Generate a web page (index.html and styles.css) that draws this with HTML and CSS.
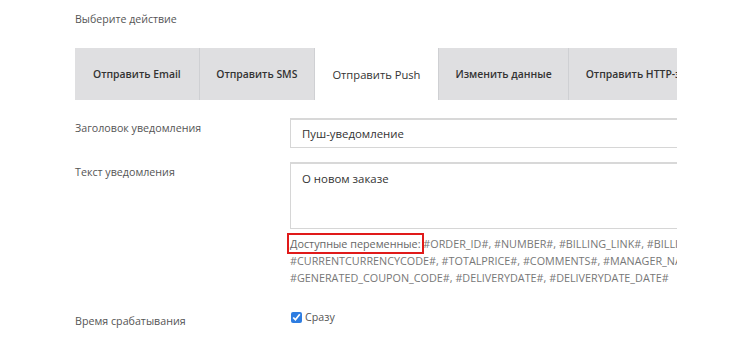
FILE: index.html
```html
<!DOCTYPE html>
<html lang="ru">
<head>
    <meta charset="UTF-8">
    <title>Действие</title>
    <link rel="stylesheet" href="styles.css">
</head>
<body>
    <div class="page">
        <div class="form">
            <div class="section-title">Выберите действие</div>

            <div class="tabs">
                <div class="tab">Отправить Email</div>
                <div class="tab">Отправить SMS</div>
                <div class="tab active">Отправить Push</div>
                <div class="tab">Изменить данные</div>
                <div class="tab">Отправить HTTP-запрос</div>
            </div>

            <div class="row">
                <label class="label" for="title">Заголовок уведомления</label>
                <div class="field">
                    <input class="input" type="text" id="title" value="Пуш-уведомление">
                </div>
            </div>

            <div class="row">
                <label class="label" for="text">Текст уведомления</label>
                <div class="field">
                    <textarea class="textarea" id="text">О новом заказе</textarea>
                    <div class="hint"><span class="marked">Доступные переменные:</span> #ORDER_ID#, #NUMBER#, #BILLING_LINK#, #BILLING_LINK_HREF#, #PRICE#,<br>#CURRENTCURRENCYCODE#, #TOTALPRICE#, #COMMENTS#, #MANAGER_NAME#, #MANAGER_EMAIL#,<br>#GENERATED_COUPON_CODE#, #DELIVERYDATE#, #DELIVERYDATE_DATE#</div>
                </div>
            </div>

            <div class="row row-check">
                <div class="label">Время срабатывания</div>
                <div class="field">
                    <label class="check"><input type="checkbox" checked> Сразу</label>
                </div>
            </div>
        </div>
    </div>
</body>
</html>
```
FILE: styles.css
```css
body {
    margin: 0;
    background-color: #fff;
    font-family: "Open Sans", Arial, sans-serif;
    color: #555;
}
.page {
    width: 677px;
    height: 341px;
    overflow: hidden;
}
.form {
    width: 900px;
    padding-left: 75px;
}
.section-title {
    font-size: 10.6px;
    line-height: 16px;
    padding-top: 11px;
    height: 37px;
}
.tabs {
    display: flex;
    height: 52px;
    margin-bottom: 18px;
}
.tab {
    display: flex;
    align-items: center;
    padding: 0 16.5px;
    background-color: #dfdfe1;
    border-left: 1px solid #cfd0d3;
    font-size: 10.4px;
    font-weight: 600;
    color: #333;
    white-space: nowrap;
}
.tab:first-child {
    border-left: none;
    padding: 0 18px;
}
.tab.active {
    background-color: #fff;
    font-weight: 400;
    font-size: 11.2px;
    padding: 0 17.5px;
}
.row {
    display: grid;
    grid-template-columns: 215px 1fr;
    margin-bottom: 14px;
}
.label {
    font-size: 10.7px;
    line-height: 16px;
    padding-top: 2px;
}
.input, .textarea {
    display: block;
    width: 100%;
    box-sizing: border-box;
    border: 1px solid #d6d6d6;
    border-top: 2px solid #d8d8d8;
    border-radius: 0;
    font-family: "Open Sans", Arial, sans-serif;
    font-size: 11.4px;
    color: #333;
    padding: 0 11px;
    outline: none;
}
.input {
    height: 30px;
}
.textarea {
    height: 67px;
    padding-top: 7px;
    resize: none;
}
.hint {
    font-size: 10.8px;
    line-height: 17px;
    color: #777;
    margin-top: 6px;
    white-space: nowrap;
}
.marked {
    outline: 2px solid #e01a1a;
    outline-offset: 1px;
    color: #666;
}
.row-check {
    margin-top: 24px;
}
.row-check .label {
    padding-top: 3px;
}
.check {
    display: flex;
    align-items: center;
    gap: 3px;
    font-size: 10.7px;
    color: #555;
    padding-left: 1px;
}
.check input {
    margin: 0;
    width: 11px;
    height: 11px;
    accent-color: #2e7de1;
}
```
